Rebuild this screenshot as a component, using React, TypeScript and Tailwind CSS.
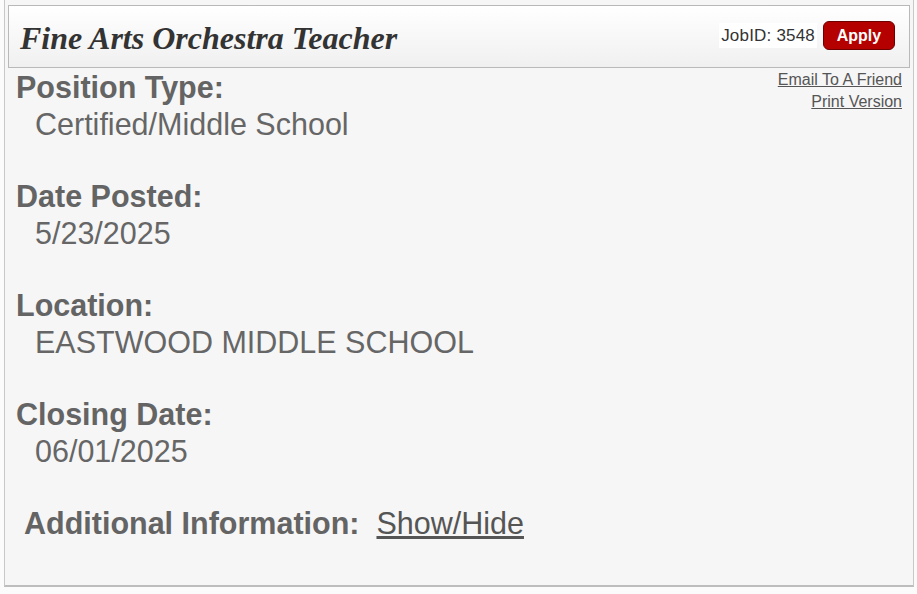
import React from 'react';

const sections = [
  { label: 'Position Type:', value: 'Certified/Middle School' },
  { label: 'Date Posted:', value: '5/23/2025' },
  { label: 'Location:', value: 'EASTWOOD MIDDLE SCHOOL' },
  { label: 'Closing Date:', value: '06/01/2025' },
];

export default function App() {
  return (
    <div className="w-[917px] h-[594px] bg-[#fbfbfb] font-['Liberation_Sans',Arial,sans-serif] overflow-hidden">
      <div className="ml-[4px] w-[910px] h-[587px] border-x border-b-2 border-[#c8c8c8] border-b-[#bdbdbd] bg-[#f6f6f6] px-[3px] pt-[5px]">
        {/* Header */}
        <div className="h-[63px] border border-[#b9b9b9] bg-gradient-to-b from-white to-[#f0f0f0] flex items-center justify-between pl-[11px] pr-[14px]">
          <h1 className="font-['Liberation_Serif','Times_New_Roman',serif] italic font-bold text-[32px] text-[#333] leading-none mt-[2px]">
            Fine Arts Orchestra Teacher
          </h1>
          <div className="flex items-center gap-[6px] -mt-[2px]">
            <span className="text-[17px] text-[#333] bg-white px-[2px] tracking-[0.2px]">JobID: 3548</span>
            <button className="w-[72px] h-[29px] rounded-[6px] bg-[#b50000] border border-[#6e0000] text-white font-bold text-[16px] leading-none">
              Apply
            </button>
          </div>
        </div>

        {/* Body */}
        <div className="relative pl-[8px] pr-[8px] pt-[1px]">
          <div className="absolute right-[8px] top-[1px] flex flex-col items-end text-[16px] leading-[22px] text-[#555]">
            <a className="underline">Email To A Friend</a>
            <a className="underline">Print Version</a>
          </div>
          {sections.map((s) => (
            <div key={s.label} className="mb-[35px]">
              <div className="text-[30.5px] leading-[37px] font-bold text-[#646464]">{s.label}</div>
              <div className="pl-[19px] text-[30.5px] leading-[37px] text-[#666]">{s.value}</div>
            </div>
          ))}
          <div className="pl-[8px] text-[30.5px] leading-[37px] text-[#646464]">
            <span className="font-bold">Additional Information:</span>
            <span className="ml-[17px] underline text-[#555]">Show/Hide</span>
          </div>
        </div>
      </div>
    </div>
  );
}
